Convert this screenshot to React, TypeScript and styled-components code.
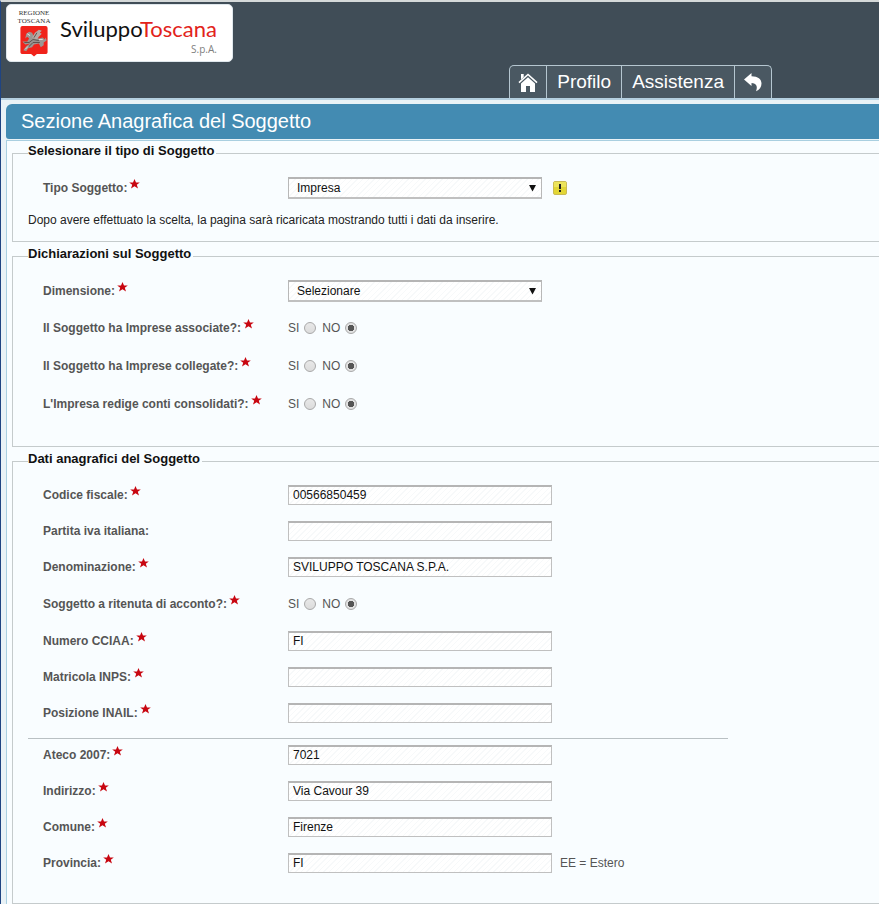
import React, { useId, useState } from "react";
import styled, { createGlobalStyle } from "styled-components";

const GlobalStyle = createGlobalStyle`
  * { box-sizing: border-box; }
  body {
    margin: 0;
    background: #e9f2f6;
    font: 12px/16px "Liberation Sans", Arial, sans-serif;
    color: #555;
  }
`;

const Page = styled.div`
  min-height: 100vh;
  display: flex;
  flex-direction: column;
  border-left: 1px solid #1f4482;
  border-top: 2px solid #d5d9d9;
  overflow-x: hidden;
`;

const Header = styled.header`
  display: flex;
  justify-content: space-between;
  align-items: flex-end;
  background: #404d57;
  border-bottom: 2px solid #b4cfdf;
`;

const Brand = styled.a`
  align-self: flex-start;
  display: flex;
  gap: 10px;
  width: 227px;
  height: 58px;
  margin: 2px 0 36px 5px;
  padding: 4px 11px;
  background: #fff;
  border: 1px solid #dfe7ec;
  border-radius: 5px;
  text-decoration: none;
`;

const Region = styled.span`
  display: flex;
  flex-direction: column;
  align-items: center;
  width: 32px;
  font: 7px/8px "Liberation Serif", serif;
  color: #333;
`;

const Wordmark = styled.span`
  display: flex;
  flex-direction: column;
  align-items: flex-end;
  padding-top: 7px;
  font: 22px/26px Lato, sans-serif;
  color: #111;
  white-space: nowrap;
`;

const Red = styled.span`
  color: #e2231a;
`;

const Company = styled.span`
  font: 10px/14px "Open Sans", sans-serif;
  color: #808080;
`;

const Nav = styled.nav`
  display: flex;
  margin-right: 107px;
  background: #4a5862;
  border: 1px solid #b5c6d0;
  border-bottom: 0;
  border-radius: 5px 5px 0 0;
`;

const NavLink = styled.a<{ $icon?: boolean }>`
  display: flex;
  align-items: center;
  justify-content: center;
  height: 32px;
  padding: 0 ${(p) => (p.$icon ? 8 : 10)}px;
  font-size: 19px;
  color: #fff;
  text-decoration: none;
  & + & { border-left: 1px solid #b5c6d0; }
`;

const Title = styled.h1`
  margin: 4px 0 0 5px;
  padding: 0 15px;
  background: #438bb2;
  border-radius: 6px 0 0 3px;
  font-size: 20px;
  font-weight: 400;
  line-height: 35px;
  color: #fff;
`;

const Form = styled.form`
  flex: 1;
  display: flex;
  flex-direction: column;
  gap: 4px;
  margin: 1px 0 0 5px;
  padding: 2px 0 0 5px;
  background: #f9fdff;
  border: solid #a9cfe0;
  border-width: 1px 0 0 1px;
`;

const Group = styled.fieldset<{ $top: number; $bottom: number }>`
  min-width: 0;
  margin: 0;
  padding: ${(p) => p.$top}px 15px ${(p) => p.$bottom}px;
  border: 1px solid #c5cbcc;
  border-right: 0;
`;

const Legend = styled.legend`
  padding: 0 2px 4px 0;
  font-size: 13px;
  font-weight: 700;
  color: #111;
`;

const Rows = styled.div<{ $gap: number; $divided?: boolean }>`
  display: flex;
  flex-direction: column;
  gap: ${(p) => p.$gap}px;
  max-width: 700px;
  padding-left: 15px;
  ${(p) => p.$divided && "margin-top: 9px; border-top: 1px solid #b9c0c3;"}
`;

const Row = styled.div<{ $height?: number }>`
  display: grid;
  grid-template-columns: 245px 1fr;
  align-items: center;
  min-height: ${(p) => p.$height ?? 32}px;
`;

const Caption = styled.label`
  display: flex;
  align-items: center;
  gap: 2px;
  font-weight: 700;
  color: #555;
`;

const Controls = styled.div`
  display: flex;
  align-items: center;
  gap: 8px;
`;

const hatch = `repeating-linear-gradient(135deg, #f7f9fa 0 1px, #fff 1px 4px)`;

const TextInput = styled.input`
  width: 264px;
  height: 20px;
  padding: 0 4px 2px;
  background: ${hatch};
  border: 1px solid #c0c0c0;
  border-top: 2px solid #b5b5b5;
  border-radius: 0;
  font: inherit;
  color: #111;
`;

const SelectWrap = styled.div`
  display: grid;
  align-items: center;
  width: 254px;
  margin-right: 3px;
  & > * { grid-area: 1 / 1; }
  & > svg { justify-self: end; margin-right: 6px; pointer-events: none; }
`;

const SelectBox = styled.select`
  appearance: none;
  width: 100%;
  height: 22px;
  padding: 0 24px 0 8px;
  background: ${hatch};
  border: 1px solid #b8b8b8;
  border-top: 2px solid #b5b5b5;
  border-bottom: 2px solid #c0c0c0;
  border-radius: 0;
  font: inherit;
  color: #111;
`;

const Choice = styled.label`
  display: flex;
  align-items: center;
  gap: 5px;
`;

const RadioSet = styled.div`
  display: flex;
  gap: 6px;
`;

const Radio = styled.input`
  appearance: none;
  width: 12px;
  height: 12px;
  margin: 0;
  border: 1px solid #a9a9a9;
  border-radius: 50%;
  background: linear-gradient(#e8e8e8, #dcdcdc);
  &:checked {
    background: radial-gradient(circle, #555 0 3px, #e2e2e2 3px);
  }
`;

const Hint = styled.p`
  margin: 8px 0 0;
  color: #222;
`;

const WarnButton = styled.button`
  display: flex;
  padding: 0;
  border: 0;
  background: none;
`;

function Star() {
  return (
    <svg width="11" height="18" viewBox="0 0 11 18" aria-hidden="true">
      <path d="M5.5 0 7 3.5H10.8L7.8 5.8 9 9.6 5.5 7.3 2 9.6 3.2 5.8.2 3.5H4Z" fill="#c80610" />
    </svg>
  );
}

function Crest() {
  return (
    <svg width="30" height="33" viewBox="0 0 30 33" aria-hidden="true">
      <path d="M1 3Q1 1 3 1H27Q29 1 29 3V28Q29 30 26 30H18L15 32.5 12 30H4Q1 30 1 28Z" fill="#f0231b" />
      <path d="M6 14 7 9 10 7 13 8 15 12 20 14 24 13 26 15 27 13 28 16 25 18 25 21 22 23 20 19 15 20 13 23 9 24 7 27 4 26 7 22 11 19 6 20 3 17 8 17 10 14 8 12Z" fill="#9c9692" />
      <path d="M13 13 16 8 20 5 23 6 21 8 23 9 20 12 18 15Z" fill="#b7aaa5" />
      <path d="M5 18 10 18 14 15 20 16M9 23 14 18 21 18M18 8 15 13" fill="none" stroke="#5c504b" strokeWidth="1" />
      <path d="M8 9 11 11M20 15 24 15M6 25 9 22" stroke="#e6dedb" strokeWidth="1" />
    </svg>
  );
}

function HomeIcon() {
  return (
    <svg width="20" height="20" viewBox="0 0 20 20" aria-hidden="true">
      <path d="M1 10.7 10 2.5 19 10.7" fill="none" stroke="#fff" strokeWidth="1.6" />
      <path d="M3 2H5.7V4.9L3 7.4Z" fill="#fff" />
      <path d="M10 5.2 17 11.5V20H12V14H8V20H3V11.5Z" fill="#fff" />
    </svg>
  );
}

function BackIcon() {
  return (
    <svg width="20" height="20" viewBox="0 0 20 20" aria-hidden="true">
      <path d="M1 7.5 8.5 1V4.3C15 4.3 18.5 7.3 18.5 11.5 18.5 15 16.5 18 13 19.2 15 15 13.5 11.2 8.5 11.1V14Z" fill="#fff" />
    </svg>
  );
}

function WarnIcon() {
  return (
    <svg width="14" height="14" viewBox="0 0 14 14" aria-hidden="true">
      <rect x=".5" y=".5" width="13" height="13" rx="1.5" fill="#e2d636" stroke="#c9bb55" />
      <path d="M1 1H13V6H1Z" fill="#ece45c" />
      <path d="M6 3H8V8H6ZM6 9H8V11H6Z" fill="#222" />
    </svg>
  );
}

type FieldProps = { label: string; value?: string; optional?: boolean; note?: string };

function TextField({ label, value = "", optional, note }: FieldProps) {
  const id = useId();
  return (
    <Row>
      <Caption htmlFor={id}>{label}{!optional && <Star />}</Caption>
      <Controls>
        <TextInput id={id} type="text" defaultValue={value} />
        {note && <span>{note}</span>}
      </Controls>
    </Row>
  );
}

type SelectProps = { label: string; options: string[]; height?: number; children?: React.ReactNode };

function SelectField({ label, options, height, children }: SelectProps) {
  const id = useId();
  return (
    <Row $height={height}>
      <Caption htmlFor={id}>{label}<Star /></Caption>
      <Controls>
        <SelectWrap>
          <SelectBox id={id}>{options.map((o) => <option key={o}>{o}</option>)}</SelectBox>
          <svg width="7" height="7" viewBox="0 0 7 7" aria-hidden="true"><path d="M0 0H7L3.5 6.5Z" fill="#111" /></svg>
        </SelectWrap>
        {children}
      </Controls>
    </Row>
  );
}

function YesNoField({ label, height }: { label: string; height?: number }) {
  const id = useId();
  const [yes, setYes] = useState(false);
  return (
    <Row $height={height}>
      <Caption as="span" id={id}>{label}<Star /></Caption>
      <RadioSet role="radiogroup" aria-labelledby={id}>
        <Choice>SI<Radio type="radio" name={id} checked={yes} onChange={() => setYes(true)} /></Choice>
        <Choice>NO<Radio type="radio" name={id} checked={!yes} onChange={() => setYes(false)} /></Choice>
      </RadioSet>
    </Row>
  );
}

export default function App() {
  return (
    <Page>
      <GlobalStyle />
      <Header>
        <Brand href="#">
          <Region><span>REGIONE</span><span>TOSCANA</span><Crest /></Region>
          <Wordmark>
            <span>Sviluppo<Red>Toscana</Red></span>
            <Company>S.p.A.</Company>
          </Wordmark>
        </Brand>
        <Nav>
          <NavLink href="#" $icon aria-label="Home"><HomeIcon /></NavLink>
          <NavLink href="#">Profilo</NavLink>
          <NavLink href="#">Assistenza</NavLink>
          <NavLink href="#" $icon aria-label="Indietro"><BackIcon /></NavLink>
        </Nav>
      </Header>
      <Title>Sezione Anagrafica del Soggetto</Title>
      <Form>
        <Group $top={9} $bottom={13}>
          <Legend>Selesionare il tipo di Soggetto</Legend>
          <Rows $gap={4}>
            <SelectField label="Tipo Soggetto:" options={["Impresa"]}>
              <WarnButton type="button" aria-label="Avviso"><WarnIcon /></WarnButton>
            </SelectField>
          </Rows>
          <Hint>Dopo avere effettuato la scelta, la pagina sarà ricaricata mostrando tutti i dati da inserire.</Hint>
        </Group>
        <Group $top={10} $bottom={26}>
          <Legend>Dichiarazioni sul Soggetto</Legend>
          <Rows $gap={6}>
            <SelectField label="Dimensione:" options={["Selezionare"]} height={30} />
            <YesNoField label="Il Soggetto ha Imprese associate?:" />
            <YesNoField label="Il Soggetto ha Imprese collegate?:" />
            <YesNoField label="L'Impresa redige conti consolidati?:" />
          </Rows>
        </Group>
        <Group $top={8} $bottom={24}>
          <Legend>Dati anagrafici del Soggetto</Legend>
          <Rows $gap={4}>
            <TextField label="Codice fiscale:" value="00566850459" />
            <TextField label="Partita iva italiana:" optional />
            <TextField label="Denominazione:" value="SVILUPPO TOSCANA S.P.A." />
            <YesNoField label="Soggetto a ritenuta di acconto?:" height={34} />
            <TextField label="Numero CCIAA:" value="FI" />
            <TextField label="Matricola INPS:" />
            <TextField label="Posizione INAIL:" />
          </Rows>
          <Rows $gap={4} $divided>
            <TextField label="Ateco 2007:" value="7021" />
            <TextField label="Indirizzo:" value="Via Cavour 39" />
            <TextField label="Comune:" value="Firenze" />
            <TextField label="Provincia:" value="FI" note="EE = Estero" />
          </Rows>
        </Group>
      </Form>
    </Page>
  );
}
